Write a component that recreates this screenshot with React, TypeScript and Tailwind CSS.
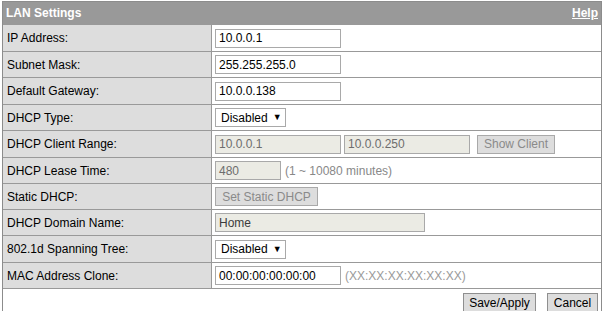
import React from 'react';

const font = { fontFamily: '"Liberation Sans", Arial, sans-serif' };

function TextBox({ value, width, disabled, dark }: { value: string; width: string; disabled?: boolean; dark?: boolean }) {
  return (
    <div
      className={`${width} h-[19px] border flex items-center px-[3px] text-[12px] leading-none ${
        disabled
          ? `bg-[#ebebe4] border-[#a9a9a9] ${dark ? 'text-[#3c3c3c]' : 'text-[#6d6d6d]'}`
          : 'bg-white border-[#a9a9a9] text-black'
      }`}
    >
      {value}
    </div>
  );
}

function Dropdown({ value }: { value: string }) {
  return (
    <div className="h-[19px] w-[71px] border border-[#a9a9a9] bg-white flex items-center pl-[5px] gap-[5px] text-[12px] leading-none text-black">
      <span>{value}</span>
      <span className="text-[9px]">▼</span>
    </div>
  );
}

function Btn({ label, width, disabled }: { label: string; width: string; disabled?: boolean }) {
  return (
    <div
      className={`${width} h-[19px] border bg-[#dddddd] flex items-center justify-center text-[12px] leading-none ${
        disabled ? 'border-[#a9a9a9] text-[#8a8a8a]' : 'border-[#8f8f8f] text-black'
      }`}
    >
      {label}
    </div>
  );
}

const rows: { label: string; h: string; field: React.ReactNode }[] = [
  { label: 'IP Address:', h: 'h-[27px]', field: <TextBox value="10.0.0.1" width="w-[126px]" /> },
  { label: 'Subnet Mask:', h: 'h-[26px]', field: <TextBox value="255.255.255.0" width="w-[126px]" /> },
  { label: 'Default Gateway:', h: 'h-[27px]', field: <TextBox value="10.0.0.138" width="w-[126px]" /> },
  { label: 'DHCP Type:', h: 'h-[26px]', field: <Dropdown value="Disabled" /> },
  {
    label: 'DHCP Client Range:',
    h: 'h-[27px]',
    field: (
      <div className="flex items-center">
        <TextBox value="10.0.0.1" width="w-[126px]" disabled />
        <div className="ml-[3px]">
          <TextBox value="10.0.0.250" width="w-[126px]" disabled />
        </div>
        <div className="ml-[7px]">
          <Btn label="Show Client" width="w-[78px]" disabled />
        </div>
      </div>
    ),
  },
  {
    label: 'DHCP Lease Time:',
    h: 'h-[26px]',
    field: (
      <div className="flex items-center gap-[4px]">
        <TextBox value="480" width="w-[66px]" disabled />
        <span className="text-[12px] text-[#888888]">(1 ~ 10080 minutes)</span>
      </div>
    ),
  },
  { label: 'Static DHCP:', h: 'h-[26px]', field: <Btn label="Set Static DHCP" width="w-[103px]" disabled /> },
  {
    label: 'DHCP Domain Name:',
    h: 'h-[26px]',
    field: <TextBox value="Home" width="w-[210px]" disabled dark />,
  },
  { label: '802.1d Spanning Tree:', h: 'h-[27px]', field: <Dropdown value="Disabled" /> },
  {
    label: 'MAC Address Clone:',
    h: 'h-[26px]',
    field: (
      <div className="flex items-center gap-[4px]">
        <TextBox value="00:00:00:00:00:00" width="w-[126px]" />
        <span className="text-[12px] text-[#9a9a9a]">(XX:XX:XX:XX:XX:XX)</span>
      </div>
    ),
  },
];

export default function App() {
  return (
    <div className="w-[606px] h-[311px] overflow-hidden bg-white pt-[1px] pl-[2px]" style={font}>
      <div className="w-[600px] border border-[#8c8c8c]">
        {/* Title bar */}
        <div className="h-[22px] bg-[#999999] flex items-center justify-between px-[3px] text-[12px] font-bold text-white">
          <span>LAN Settings</span>
          <span className="underline">Help</span>
        </div>

        {rows.map((r) => (
          <div key={r.label} className={`${r.h} flex border-t border-[#999999]`}>
            <div className="w-[209px] shrink-0 bg-[#dddddd] border-r border-[#999999] flex items-center pl-[4px] text-[12px] text-black">
              {r.label}
            </div>
            <div className="flex-1 flex items-center pl-[3px]">{r.field}</div>
          </div>
        ))}

        {/* Actions */}
        <div className="h-[30px] border-t border-[#999999] flex justify-end items-start pt-[4px] pr-[3px] gap-[11px]">
          <Btn label="Save/Apply" width="w-[73px]" />
          <Btn label="Cancel" width="w-[51px]" />
        </div>
      </div>
    </div>
  );
}
